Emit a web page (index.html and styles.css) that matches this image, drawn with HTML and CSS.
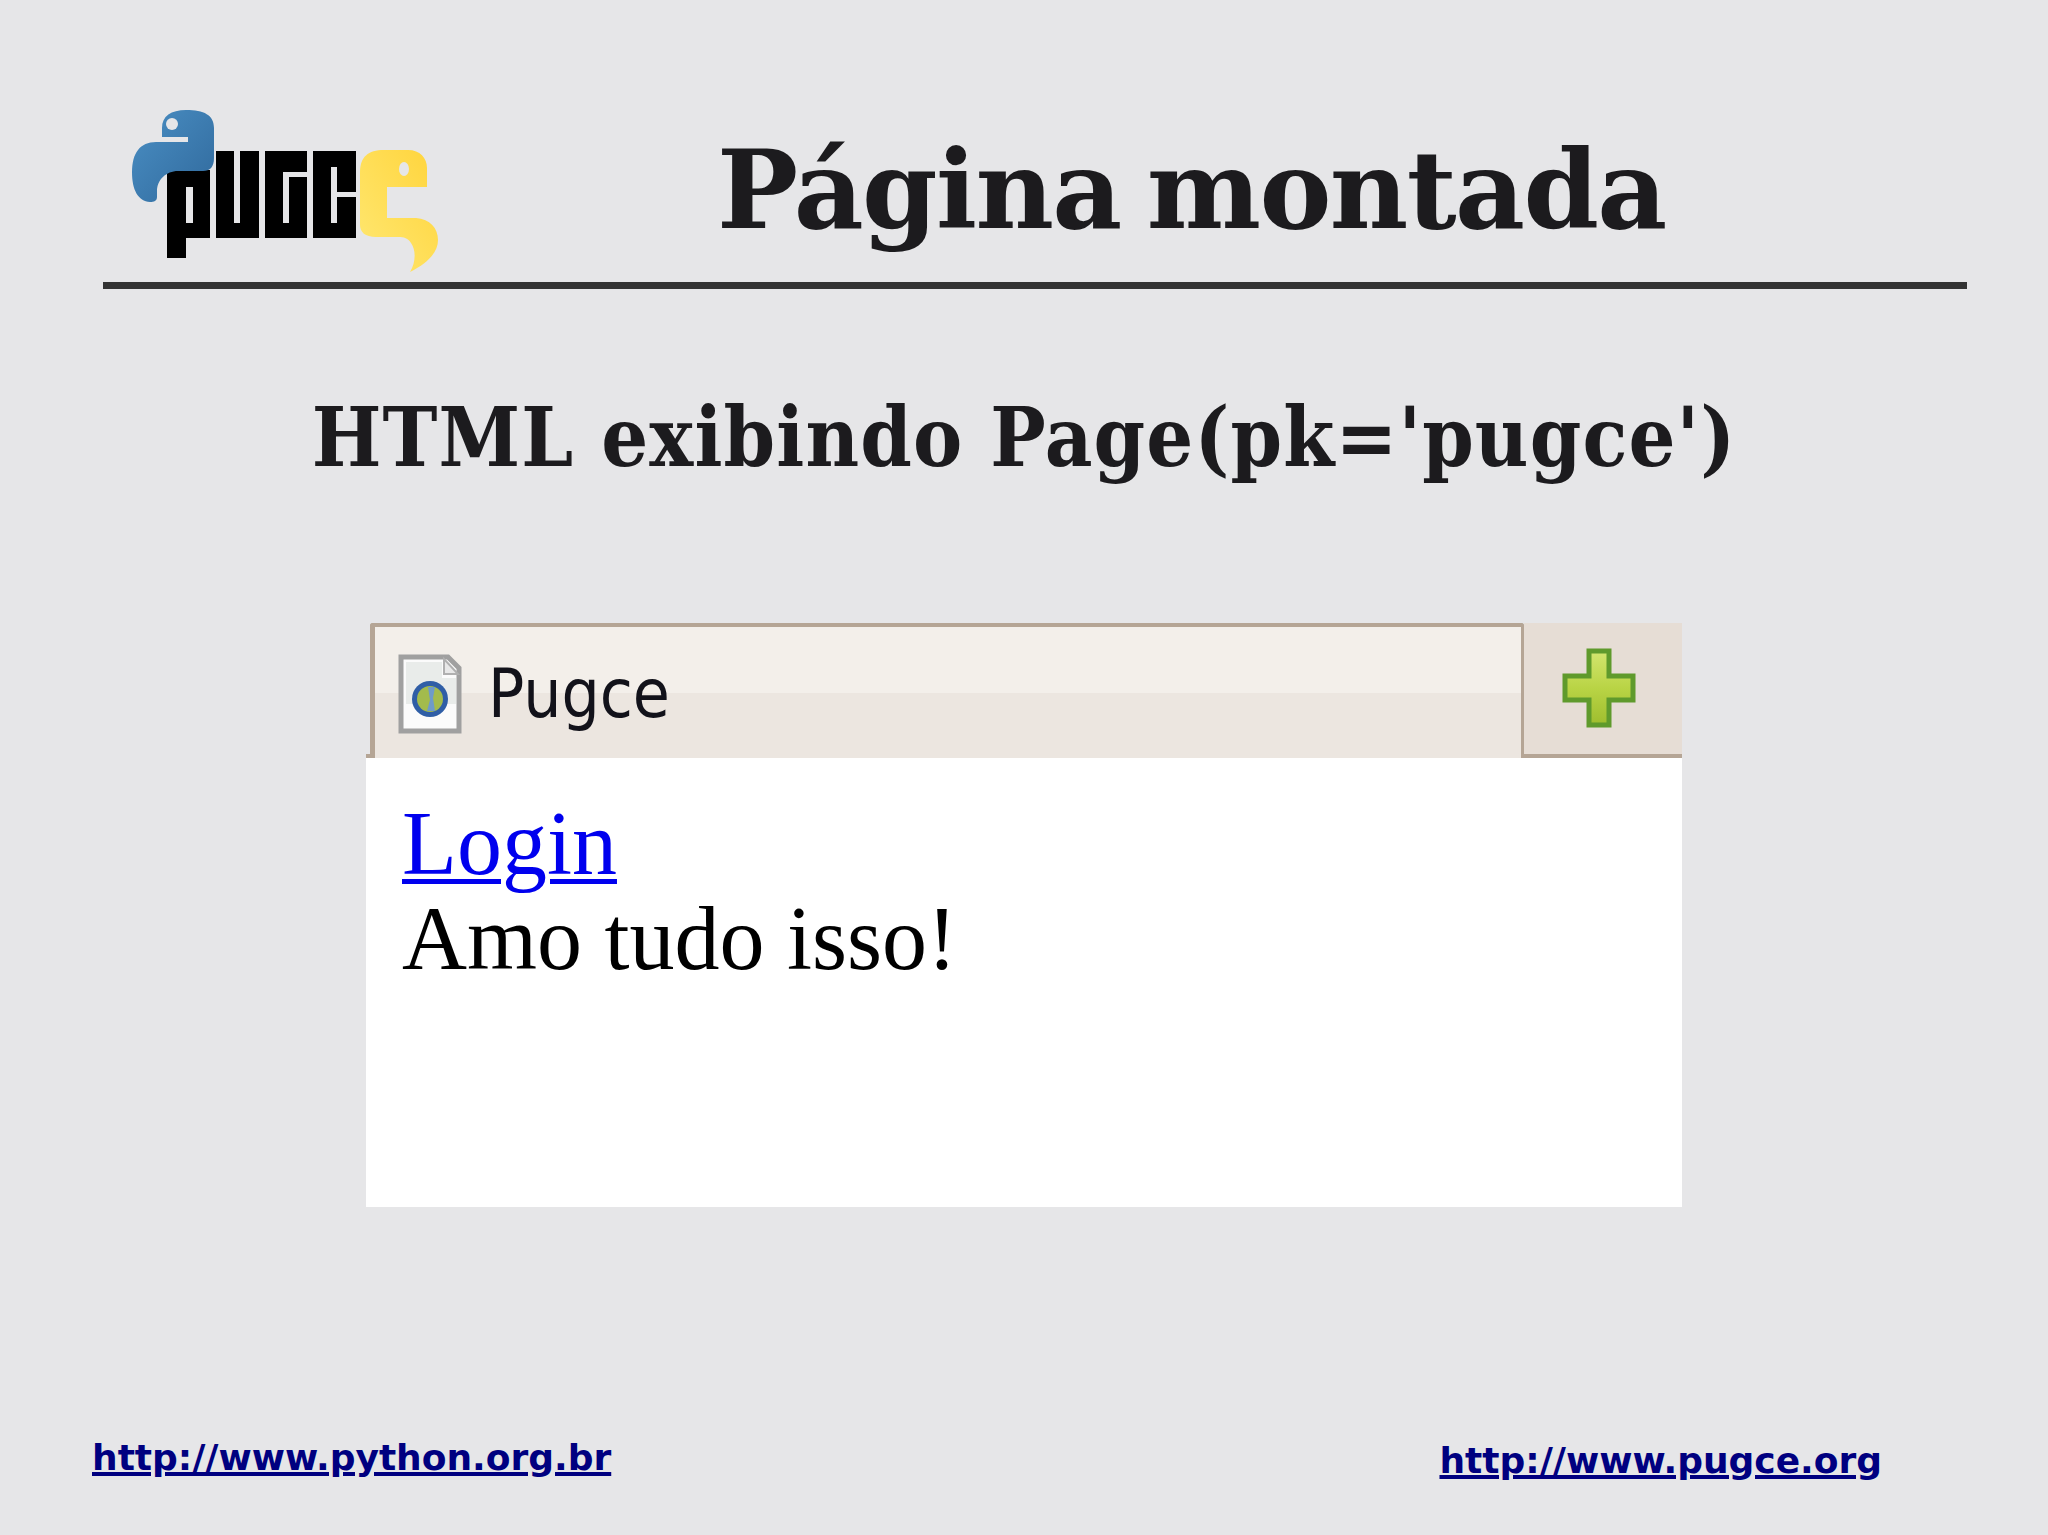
FILE: index.html
```html
<!DOCTYPE html>
<html lang="pt-BR">
<head>
    <meta charset="UTF-8">
    <title>Página montada</title>
    <link rel="stylesheet" href="styles.css">
</head>
<body>
    <div class="slide">
        <header class="slide-header">
            <svg class="logo" viewBox="130 108 310 170" width="310" height="170" role="img" aria-label="PUGCE">
                <defs>
                    <linearGradient id="snakeBlue" x1="0" y1="0" x2="1" y2="1">
                        <stop offset="0" stop-color="#4a8fc4"/>
                        <stop offset="1" stop-color="#30699c"/>
                    </linearGradient>
                    <linearGradient id="snakeYellow" x1="0" y1="1" x2="1" y2="0">
                        <stop offset="0" stop-color="#ffe873"/>
                        <stop offset="1" stop-color="#ffd43b"/>
                    </linearGradient>
                </defs>
                <g fill="#000">
                    <rect x="216" y="151" width="43" height="87"/>
                    <rect x="265" y="151" width="42" height="87"/>
                    <rect x="313" y="151" width="43" height="87"/>
                    <rect x="167" y="170" width="43" height="68"/>
                    <rect x="167" y="238" width="19" height="20"/>
                </g>
                <g fill="#e6e6e8">
                    <rect x="186" y="187" width="7" height="36"/>
                    <rect x="234" y="151" width="6" height="72"/>
                    <rect x="283" y="172" width="6" height="51"/>
                    <rect x="283" y="172" width="24" height="5"/>
                    <rect x="331" y="167" width="6" height="56"/>
                    <rect x="337" y="192" width="19" height="5"/>
                </g>
                <path fill="url(#snakeBlue)" d="M162 137V128C162 116 171 110 186 110C204 110 214 115 214 128V158C214 167 210 171 203 171H178C166 171 157 180 157 191V197C157 201 154 202 150 202C138 201 132 190 132 172C132 153 140 142 156 142H188V137Z"/>
                <ellipse cx="172" cy="124" rx="6" ry="6" fill="#e6e6e8"/>
                <path fill="url(#snakeYellow)" d="M360 172C360 157 368 150 384 150H408C420 150 427 158 427 168V187H387V218H416C430 219 438 228 438 240C438 252 428 263 410 272C416 262 416 250 411 243C408 238 404 237 398 237H376C365 237 360 232 360 225Z"/>
                <ellipse cx="404" cy="169" rx="5" ry="7" fill="#e6e6e8"/>
            </svg>
            <h1 class="slide-title">Página montada</h1>
        </header>

        <h2 class="slide-subtitle">HTML exibindo Page(pk='pugce')</h2>

        <div class="browser">
            <div class="tabbar">
                <span class="tab-foot"></span>
                <div class="tab">
                    <svg class="page-icon" viewBox="0 0 64 80" width="64" height="80">
                        <path d="M3 3H50L61 14V77H3Z" fill="#fbfbfb" stroke="#a0a0a0" stroke-width="5"/>
                        <path d="M8 8H44V24H58V50H8Z" fill="#e9ecea"/>
                        <path d="M46 5V20H60Z" fill="#e8e8e8" stroke="#b0b0b0" stroke-width="2"/>
                        <circle cx="32" cy="45" r="18" fill="#2f5ea6"/>
                        <circle cx="32" cy="45" r="13" fill="#a3bb4c"/>
                        <path d="M30 33H37L35 44L37 57H29L32 46Z" fill="#6f9bc8"/>
                    </svg>
                    <span class="tab-label">Pugce</span>
                </div>
                <div class="new-tab">
                    <svg class="plus-icon" viewBox="0 0 74 80" width="74" height="80">
                        <defs>
                            <linearGradient id="plusFill" x1="0" y1="0" x2="0" y2="1">
                                <stop offset="0" stop-color="#d3e56f"/>
                                <stop offset="0.5" stop-color="#b9d445"/>
                                <stop offset="1" stop-color="#9ebd2e"/>
                            </linearGradient>
                        </defs>
                        <path d="M27 3H47V28H71V52H47V77H27V52H3V28H27Z" fill="url(#plusFill)" stroke="#5f9a2c" stroke-width="5"/>
                    </svg>
                </div>
            </div>
            <div class="browser-page">
                <a class="page-link" href="#">Login</a><br>
                Amo tudo isso!
            </div>
        </div>

        <footer class="slide-footer">
            <a class="footer-link" href="#">http://www.python.org.br</a>
            <a class="footer-link footer-link-right" href="#">http://www.pugce.org</a>
        </footer>
    </div>
</body>
</html>
```

FILE: styles.css
```css
:root {
    --slide-bg: #e6e6e8;
    --ink: #1c1b1e;
    --rule: #333333;
    --tab-border: #b5a595;
    --footer-link: #000080;
}

* {
    box-sizing: border-box;
}

html, body {
    margin: 0;
    background-color: var(--slide-bg);
}

.slide {
    width: 2048px;
    height: 1535px;
    overflow: hidden;
    display: flex;
    flex-direction: column;
    color: var(--ink);
}

.slide-header {
    display: flex;
    align-items: flex-start;
    height: 289px;
    margin: 0 81px 0 103px;
    padding: 108px 0 0 27px;
    border-bottom: 7px solid var(--rule);
}

.logo {
    flex: none;
}

.slide-title {
    margin: 17px 0 0 277px;
    font-family: "DejaVu Serif", serif;
    font-size: 108px;
    line-height: 130px;
    letter-spacing: -1.6px;
    word-spacing: -10px;
    font-weight: 700;
    white-space: nowrap;
}

.slide-subtitle {
    margin: 98px 0 0;
    text-align: center;
    font-family: "DejaVu Serif", serif;
    font-stretch: condensed;
    font-size: 82px;
    line-height: 100px;
    letter-spacing: 1.15px;
    font-weight: 700;
}

.browser {
    width: 1316px;
    height: 584px;
    margin: 136px auto 0;
    display: flex;
    flex-direction: column;
    background-color: #ffffff;
}

.tabbar {
    flex: none;
    display: flex;
    height: 135px;
    background-color: var(--slide-bg);
}

.tab-foot {
    flex: none;
    width: 4px;
    height: 4px;
    align-self: flex-end;
    background-color: var(--tab-border);
}

.tab {
    flex: none;
    width: 1154px;
    display: flex;
    align-items: center;
    gap: 26px;
    padding: 2px 0 0 23px;
    border: solid var(--tab-border);
    border-width: 4px 3px 0 5px;
    border-radius: 3px 3px 0 0;
    background: linear-gradient(#f3efea 0 66px, #ece6e0 66px);
}

.page-icon {
    flex: none;
}

.tab-label {
    font-family: "DejaVu Sans", sans-serif;
    font-stretch: condensed;
    font-size: 67px;
    color: #12121a;
}

.new-tab {
    flex: 1;
    display: flex;
    align-items: flex-start;
    padding: 25px 0 0 38px;
    border-bottom: 4px solid var(--tab-border);
    background-color: #e6ddd5;
}

.browser-page {
    flex: 1;
    padding: 38px 0 0 36px;
    font-family: "Liberation Serif", serif;
    font-size: 90px;
    line-height: 95px;
    color: #000000;
}

.page-link {
    color: #0000ee;
    text-decoration-thickness: 5px;
    text-underline-offset: 5px;
}

.slide-footer {
    display: flex;
    justify-content: space-between;
    padding: 0 166px 0 92px;
    margin-top: 230px;
}

.footer-link {
    font-family: "DejaVu Sans", sans-serif;
    font-weight: 700;
    font-size: 36px;
    color: var(--footer-link);
    text-decoration-thickness: 4px;
}

.footer-link-right {
    margin-top: 3px;
}
```
